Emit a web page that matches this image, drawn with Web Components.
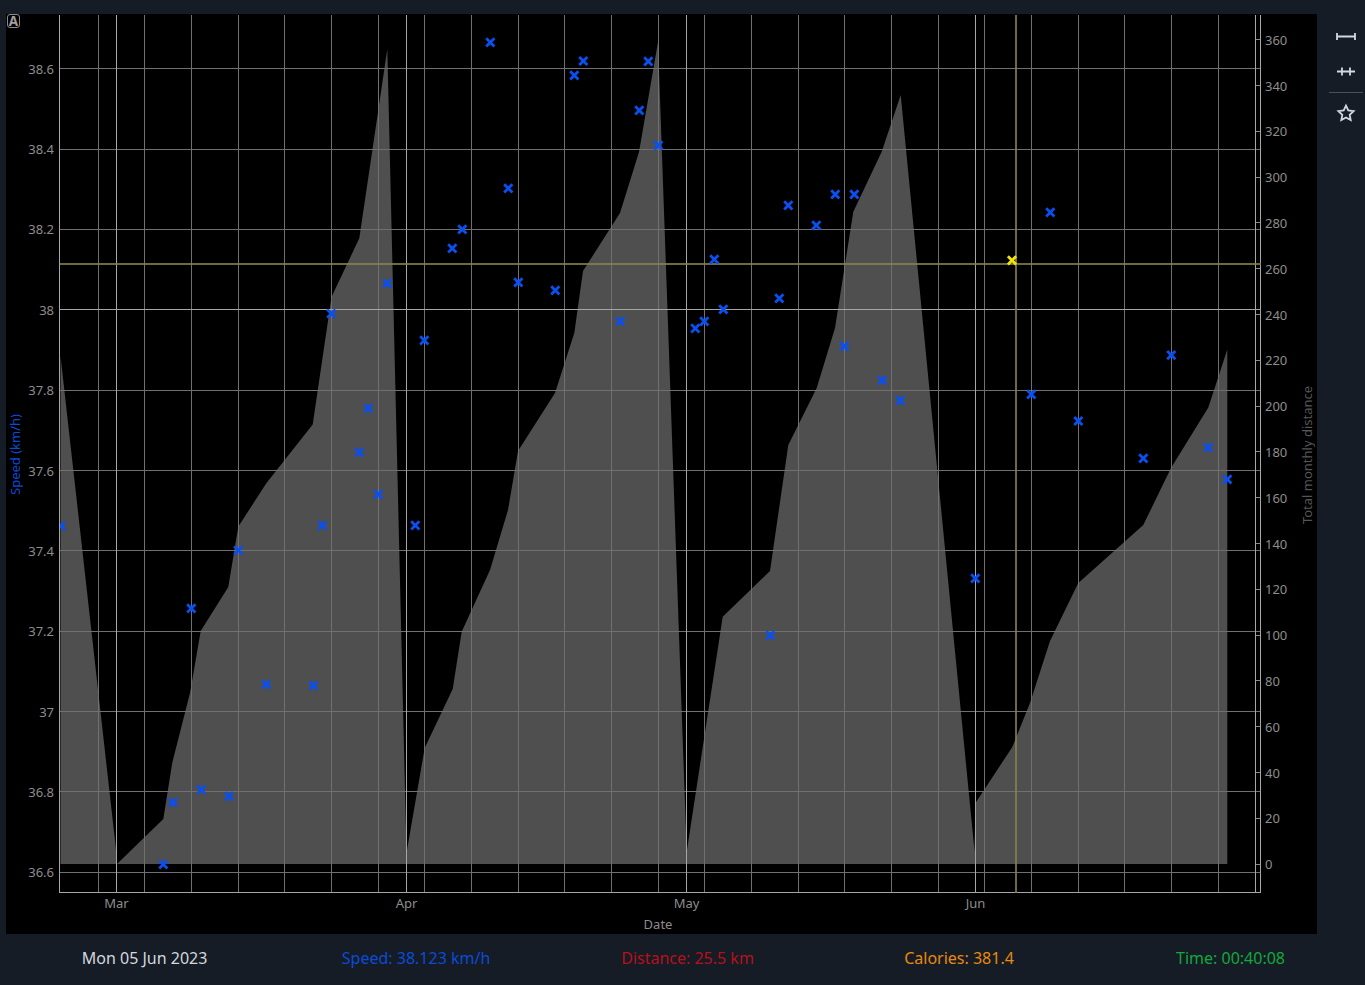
<!DOCTYPE html>
<html lang="en">
<head>
<meta charset="utf-8">
<title>Speed chart</title>
<style>
  html, body { margin: 0; height: 100%; background: #151c26; overflow: hidden; }
  body { font-family: "Noto Sans", sans-serif; }
</style>
</head>
<body>
<app-layout>
  <speed-chart slot="chart"></speed-chart>
  <chart-toolbar slot="tools">
    <tool-icon name="range"></tool-icon>
    <tool-icon name="hline"></tool-icon>
    <tool-sep></tool-sep>
    <tool-icon name="star"></tool-icon>
  </chart-toolbar>
  <status-bar slot="status">
    <status-item color="#d3d8dd">Mon 05 Jun 2023</status-item>
    <status-item color="#0b4bd6">Speed: 38.123 km/h</status-item>
    <status-item color="#b8101a">Distance: 25.5 km</status-item>
    <status-item color="#e88a0c">Calories: 381.4</status-item>
    <status-item color="#12a83a">Time: 00:40:08</status-item>
  </status-bar>
</app-layout>

<script>
class AppLayout extends HTMLElement {
  constructor() {
    super();
    this.attachShadow({ mode: "open" });
  }

  connectedCallback() {
    this.shadowRoot.innerHTML = /* html */`
    <style>
      :host {
        display: grid;
        grid-template-columns: 1311px 48px;
        grid-template-rows: 920px 51px;
        padding: 14px 0 0 6px;
        width: 1365px;
        height: 985px;
        box-sizing: border-box;
      }
      .status { grid-column: 1 / 3; margin-left: -6px; }
    </style>
    <slot name="chart"></slot>
    <slot name="tools"></slot>
    <div class="status"><slot name="status"></slot></div>
    `;
  }
}

class SpeedChart extends HTMLElement {
  constructor() {
    super();
    this.attachShadow({ mode: "open" });
  }

  static get styles() {
    return /* css */`
      :host {
        display: block;
        position: relative;
        width: 1311px;
        height: 920px;
        background: #000;
      }
      svg { display: block; }
      text {
        font-family: "Noto Sans", sans-serif;
        font-size: 13px;
        fill: #8d8d8d;
      }
      .grid { stroke: #707070; stroke-width: 1; shape-rendering: crispEdges; }
      .bright { stroke: #a6a6a6; stroke-width: 1; shape-rendering: crispEdges; }
      .cross { stroke: rgba(133,130,73,.82); stroke-width: 2; shape-rendering: crispEdges; }
      .tick { stroke: #8a8a8a; stroke-width: 1; shape-rendering: crispEdges; }
      .mark { fill: none; stroke: #0a4ff0; stroke-width: 2.8; }
      .mark.on { stroke: #f4e20a; }
      .auto {
        position: absolute;
        left: 1px;
        top: 0;
        width: 13px;
        height: 14px;
        box-sizing: border-box;
        border: 1px solid #8a8a8a;
        border-radius: 3px;
        font-size: 13.5px;
        line-height: 12px;
        font-weight: 700;
        text-align: center;
        color: #a0a0a0;
      }
    `;
  }

  // area outline, page pixels
  static get area() {
    return [[60.5,356],[115.5,845],[117,864],[163.3,819],[172.3,762.6],[190,693],[200.7,631],[228.3,587],
      [238.3,526.6],[266.5,483],[312.7,424.5],[331.5,297],[359.3,238.3],[378,112],[387.3,49],[406.5,853],
      [424.7,748],[452.7,689],[461.7,631.7],[490,570],[508,510],[518,451],[555,393],[574.3,333],[583,271],
      [620,213],[639,152],[658,42],[686.7,852],[722.7,616.7],[770,571],[788.3,445],[816.7,388],[835,328],
      [853.3,211.7],[881.7,151.7],[900.7,95],[974.5,851],[975.5,803],[1012.3,747],[1030,703],[1050,641],
      [1078.3,583],[1143.3,525],[1171,468],[1208.3,407.6],[1227.3,349.5],[1227.3,864],[60.5,864]];
  }

  static get points() {
    return [[61,526],[163.3,864.3],[173,802.5],[191.3,608.4],[201.3,789.6],[229,796.4],[238.3,550.3],
      [266.3,684.5],[313.3,685.5],[322.3,525.3],[331.3,313.7],[359.3,452.3],[368.3,408.3],[378.3,494.3],
      [387.3,283.3],[415.3,525.3],[424.3,340.3],[452.3,248.3],[462.3,229.3],[490.3,42.3],[508.3,188.3],
      [518.3,282.3],[555.3,290.3],[574.3,75.3],[583.3,61],[620.3,321.3],[639.3,110.3],[648.3,61.3],
      [658.3,145.3],[695.3,328.3],[704.3,321.3],[714.3,259.3],[723.3,309.3],[770.3,635.3],[779.3,298.3],
      [788.3,205.3],[816.3,225.3],[835.3,194.3],[854.3,194.3],[844.3,346.3],[882.3,380.3],[900.3,400.3],
      [975.3,578.3],[1031.3,394.4],[1050.3,212.3],[1078.3,421],[1143.3,458.3],[1171.3,355.2],[1208.3,447.5],
      [1227.3,479.3]];
  }

  mark([x, y], cls) {
    const r = 4.1;
    return `<path class="${cls}" d="M${x - r} ${y - r}L${x + r} ${y + r}M${x + r} ${y - r}L${x - r} ${y + r}"/>`;
  }

  render() {
    const left = 59.5, right = 1260.5, top = 15, bottom = 892.5;
    const weeks = [98,144,191,238,284,331,378,424,471,518,564,611,658,704,751,798,844,891,938,984,1031,1078,1124,1171,1218];
    const months = [[116,"Mar"],[406,"Apr"],[686,"May"],[975,"Jun"]];
    const speeds = [[68,"38.6"],[149,"38.4"],[229,"38.2"],[309,"38"],[390,"37.8"],[470,"37.6"],
      [550,"37.4"],[631,"37.2"],[711,"37"],[791,"36.8"],[872,"36.6"]];

    let s = `<polygon points="${SpeedChart.area.map(p => p.join(",")).join(" ")}" fill="#4f4f4f"/>`;

    weeks.forEach(x => {
      s += `<line class="grid" x1="${x + .5}" x2="${x + .5}" y1="${top}" y2="${bottom}"/>`;
    });
    speeds.forEach(([y, label], i) => {
      const cls = label === "38" ? "bright" : "grid";
      s += `<line class="${cls}" x1="${left}" x2="${right}" y1="${y + .5}" y2="${y + .5}"/>`;
      s += `<text x="54" y="${Math.round(68.4 + i * 80.36 + 5.3)}" text-anchor="end">${label}</text>`;
    });
    months.forEach(([x, label]) => {
      s += `<line class="bright" x1="${x + .5}" x2="${x + .5}" y1="${top}" y2="${bottom}"/>`;
      s += `<text x="${x + .5}" y="908" text-anchor="middle">${label}</text>`;
    });

    // right axis, 20 units every 45.8px
    for (let n = 0; n <= 18; n++) {
      const y = 864 - n * 45.79;
      s += `<line class="tick" x1="1256" x2="1260" y1="${Math.floor(y) + .5}" y2="${Math.floor(y) + .5}"/>`;
      s += `<text x="1265" y="${Math.round(y + 5.1)}">${n * 20}</text>`;
    }

    s += `<line class="bright" x1="1255.5" x2="1255.5" y1="${top}" y2="${bottom}"/>`;
    s += `<line class="bright" x1="${left}" x2="${left}" y1="${top}" y2="${bottom}"/>`;
    s += `<line class="bright" x1="${right}" x2="${right}" y1="${top}" y2="${bottom}"/>`;
    s += `<line class="bright" x1="${left}" x2="${right}" y1="${bottom}" y2="${bottom}"/>`;

    s += `<text x="658" y="929" text-anchor="middle">Date</text>`;
    s += `<text transform="translate(20 454.5) rotate(-90)" text-anchor="middle" style="fill:#0b4bd6">Speed (km/h)</text>`;
    s += `<text transform="translate(1311.5 455) rotate(-90)" text-anchor="middle" style="fill:#555">Total monthly distance</text>`;

    s += `<line class="cross" x1="1016" x2="1016" y1="${top}" y2="${bottom}"/>`;
    s += `<line class="cross" x1="${left}" x2="${right}" y1="264" y2="264"/>`;

    s += `<g clip-path="url(#plot)">${SpeedChart.points.map(p => this.mark(p, "mark")).join("")}</g>`;
    s += this.mark([1012, 260.4], "mark on");

    this.shadowRoot.innerHTML = /* html */`
    <style>${SpeedChart.styles}</style>
    <svg width="1311" height="920" viewBox="6 14 1311 920">
      <defs><clipPath id="plot"><rect x="60" y="15" width="1195" height="878"/></clipPath></defs>
      ${s}
    </svg>
    <div class="auto">A</div>
    `;
  }

  connectedCallback() {
    this.render();
  }
}

class ChartToolbar extends HTMLElement {
  constructor() {
    super();
    this.attachShadow({ mode: "open" });
  }

  connectedCallback() {
    this.shadowRoot.innerHTML = /* html */`
    <style>
      :host {
        display: flex;
        flex-direction: column;
        align-items: center;
        width: 48px;
        padding: 9px 0 0 10px;
        box-sizing: border-box;
      }
    </style>
    <slot></slot>
    `;
  }
}

class ToolIcon extends HTMLElement {
  constructor() {
    super();
    this.attachShadow({ mode: "open" });
  }

  static get icons() {
    return {
      range: `<path d="M2 10v7M20 10v7M2 13.5h18"/>`,
      hline: `<path d="M2 13.5h18M7 9.5v8M15 9.5v8"/>`,
      star: `<path d="M11 5.6l2.3 4.9 5.3.7-3.9 3.6 1 5.3-4.7-2.6-4.7 2.6 1-5.3-3.9-3.6 5.3-.7z"/>`
    };
  }

  connectedCallback() {
    const name = this.getAttribute("name");
    this.shadowRoot.innerHTML = /* html */`
    <style>
      :host { display: block; width: 22px; height: 35px; }
      svg { display: block; fill: none; stroke: #d3d8dd; stroke-width: 1.8; }
    </style>
    <svg width="22" height="27" viewBox="0 0 22 27">${ToolIcon.icons[name]}</svg>
    `;
  }
}

class ToolSep extends HTMLElement {
  constructor() {
    super();
    this.attachShadow({ mode: "open" });
  }

  connectedCallback() {
    this.shadowRoot.innerHTML = /* html */`
    <style>
      :host { display: block; width: 34px; height: 1px; background: #4a5058; margin: -1px 0 7px 0; }
    </style>
    `;
  }
}

class StatusBar extends HTMLElement {
  constructor() {
    super();
    this.attachShadow({ mode: "open" });
  }

  connectedCallback() {
    this.shadowRoot.innerHTML = /* html */`
    <style>
      :host {
        display: grid;
        grid-template-columns: repeat(5, 271.5px);
        align-items: center;
        height: 47px;
        padding-left: 8.8px;
        font-family: "Noto Sans", sans-serif;
        font-size: 16px;
      }
    </style>
    <slot></slot>
    `;
  }
}

class StatusItem extends HTMLElement {
  constructor() {
    super();
    this.attachShadow({ mode: "open" });
  }

  connectedCallback() {
    this.shadowRoot.innerHTML = /* html */`
    <style>
      :host { display: block; text-align: center; color: ${this.getAttribute("color")}; }
    </style>
    <slot></slot>
    `;
  }
}

customElements.define("app-layout", AppLayout);
customElements.define("speed-chart", SpeedChart);
customElements.define("chart-toolbar", ChartToolbar);
customElements.define("tool-icon", ToolIcon);
customElements.define("tool-sep", ToolSep);
customElements.define("status-bar", StatusBar);
customElements.define("status-item", StatusItem);
</script>
</body>
</html>
